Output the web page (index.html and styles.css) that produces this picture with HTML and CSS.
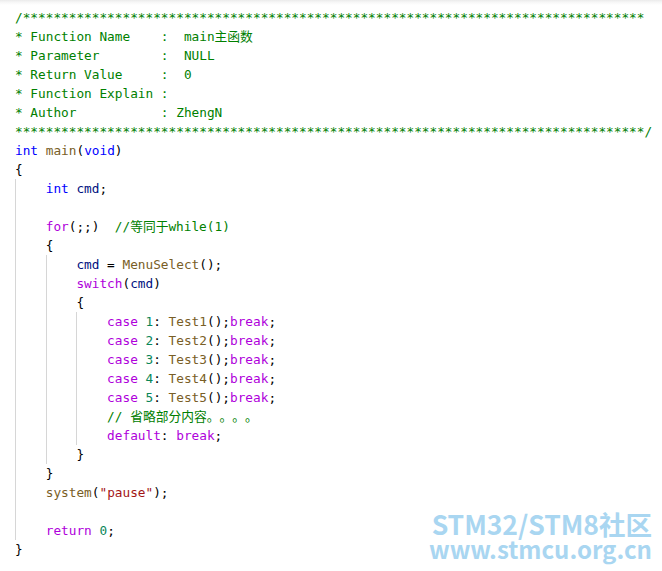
FILE: index.html
```html
<!DOCTYPE html>
<html lang="zh-CN">
<head>
<meta charset="utf-8">
<title>main</title>
<link rel="stylesheet" href="styles.css">
</head>
<body>
<div class="page">
<div class="code">
<div class="ln"><span class="cm">/*********************************************************************************</span></div>
<div class="ln"><span class="cm">* Function Name    :  main主函数</span></div>
<div class="ln"><span class="cm">* Parameter        :  NULL</span></div>
<div class="ln"><span class="cm">* Return Value     :  0</span></div>
<div class="ln"><span class="cm">* Function Explain :</span></div>
<div class="ln"><span class="cm">* Author           : ZhengN</span></div>
<div class="ln"><span class="cm">**********************************************************************************/</span></div>
<div class="ln"><span class="kw">int</span> <span class="fn">main</span>(<span class="kw">void</span>)</div>
<div class="ln">{</div>
<div class="blk">
<div class="ln"><span class="kw">int</span> <span class="var">cmd</span>;</div>
<div class="ln"> </div>
<div class="ln"><span class="ctl">for</span>(;;)  <span class="cm">//等同于while(1)</span></div>
<div class="ln">{</div>
<div class="blk">
<div class="ln"><span class="var">cmd</span> = <span class="fn">MenuSelect</span>();</div>
<div class="ln"><span class="ctl">switch</span>(<span class="var">cmd</span>)</div>
<div class="ln">{</div>
<div class="blk">
<div class="ln"><span class="ctl">case</span> <span class="num">1</span>: <span class="fn">Test1</span>();<span class="ctl">break</span>;</div>
<div class="ln"><span class="ctl">case</span> <span class="num">2</span>: <span class="fn">Test2</span>();<span class="ctl">break</span>;</div>
<div class="ln"><span class="ctl">case</span> <span class="num">3</span>: <span class="fn">Test3</span>();<span class="ctl">break</span>;</div>
<div class="ln"><span class="ctl">case</span> <span class="num">4</span>: <span class="fn">Test4</span>();<span class="ctl">break</span>;</div>
<div class="ln"><span class="ctl">case</span> <span class="num">5</span>: <span class="fn">Test5</span>();<span class="ctl">break</span>;</div>
<div class="ln"><span class="cm">// 省略部分内容。。。。</span></div>
<div class="ln"><span class="ctl">default</span>: <span class="ctl">break</span>;</div>
</div>
<div class="ln">}</div>
</div>
<div class="ln">}</div>
<div class="ln"><span class="fn">system</span>(<span class="str">"pause"</span>);</div>
<div class="ln"> </div>
<div class="ln"><span class="ctl">return</span> <span class="num">0</span>;</div>
</div>
<div class="ln">}</div>
</div>
<div class="mark">
<div class="mark-1">STM32/STM8社区</div>
<div class="mark-2">www.stmcu.org.cn</div>
</div>
</div>
</body>
</html>
```
FILE: styles.css
```css
html, body {
  margin: 0;
  padding: 0;
  background: #ffffff;
}
.page {
  position: relative;
  width: 662px;
  height: 571px;
  overflow: hidden;
  background: linear-gradient(to bottom, #ebebeb 0px, #f6f6f6 2px, #ffffff 5px) no-repeat;
  background-size: 100% 6px;
  box-sizing: border-box;
  padding: 8px 0 0 15px;
}
.code {
  font-family: "DejaVu Sans Mono", "Noto Sans CJK SC", monospace;
  font-size: 12.75px;
  line-height: 19px;
  color: #000000;
  text-spacing-trim: space-all;
}
.ln {
  white-space: pre;
  height: 19px;
}
.blk {
  border-left: 1px solid #d6d6d6;
  padding-left: calc(4ch - 1px);
}
.cm { color: #008000; }
.kw { color: #0000ff; }
.ctl { color: #af00db; }
.fn { color: #795e26; }
.var { color: #001080; }
.num { color: #098658; }
.str { color: #a31515; }
.mark {
  position: absolute;
  right: 10px;
  bottom: 10px;
  color: #a9d6f1;
  font-family: "Noto Sans CJK SC", "Noto Sans", sans-serif;
  font-weight: 700;
  text-align: right;
}
.mark-1 {
  font-size: 26.5px;
  line-height: 27px;
}
.mark-2 {
  font-size: 24px;
  line-height: 24px;
}
```
